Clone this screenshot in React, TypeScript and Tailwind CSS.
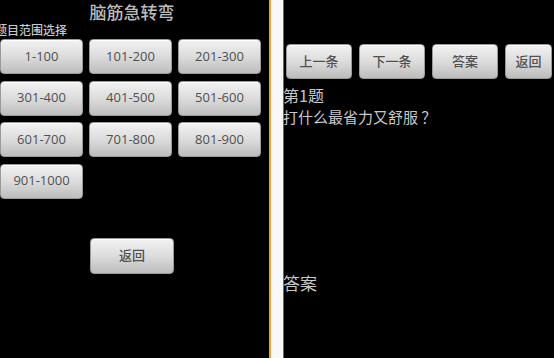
import React from "react";

const cjk = { fontFamily: '"Noto Sans CJK SC", "Noto Sans", sans-serif' };
const btnFont = { fontFamily: '"Open Sans", "Noto Sans CJK SC", sans-serif' };

function Btn({ label, className = "" }: { label: string; className?: string }) {
  return (
    <div
      className={
        "flex items-center justify-center rounded-[4px] border border-[#9a9a9a] bg-gradient-to-b from-[#f2f2f2] via-[#dcdcdc] to-[#bdbdbd] text-[13px] font-medium text-[#505050] shadow-[inset_0_1px_0_#ffffff] " +
        className
      }
      style={btnFont}
    >
      {label}
    </div>
  );
}

export default function App() {
  const ranges = [
    "1-100",
    "101-200",
    "201-300",
    "301-400",
    "401-500",
    "501-600",
    "601-700",
    "701-800",
    "801-900",
    "901-1000",
  ];
  return (
    <div className="flex h-[358px] w-[554px] overflow-hidden bg-black" style={cjk}>
      {/* left screen */}
      <div className="flex w-[269px] shrink-0 flex-col bg-black">
        <div className="pr-[5px] pt-[1px] text-center text-[17px] font-medium leading-[21px] text-[#bdbdbd]">脑筋急转弯</div>
        <div className="ml-[-5px] text-[12px] font-medium leading-[16px] text-[#c8c8c8]">题目范围选择</div>
        <div className="mt-[1px] grid grid-cols-[83px_83px_83px] gap-x-[6px] gap-y-[6.5px]">
          {ranges.map((r) => (
            <Btn key={r} label={r} className="h-[35px]" />
          ))}
        </div>
        <Btn label="返回" className="ml-[90px] mt-[39px] h-[36px] w-[84px] text-[12px]" />
      </div>
      {/* divider */}
      <div className="w-[2px] shrink-0 bg-[#f0a23c]" />
      <div className="w-[12px] shrink-0 bg-[#f8f8f8]" />
      <div className="w-[1px] shrink-0 bg-[#6a6a6a]" />
      {/* right screen */}
      <div className="flex flex-1 flex-col bg-black">
        <div className="ml-[2px] mt-[44px] flex gap-x-[7px]">
          <Btn label="上一条" className="h-[35px] w-[66px] text-[12px]" />
          <Btn label="下一条" className="h-[35px] w-[66px] text-[12px]" />
          <Btn label="答案" className="h-[35px] w-[66px] text-[12px]" />
          <Btn label="返回" className="h-[35px] w-[47px] text-[12px]" />
        </div>
        <div className="ml-[-1px] mt-[5px] text-[16px] leading-[22px] text-[#c8c8c8]">第1题</div>
        <div className="ml-[-1px] mt-[1px] text-[15px] leading-[20px] text-[#c8c8c8]">打什么最省力又舒服 ？</div>
        <div className="ml-[-1px] mt-[144px] text-[17px] leading-[24px] text-[#c8c8c8]">答案</div>
      </div>
    </div>
  );
}
